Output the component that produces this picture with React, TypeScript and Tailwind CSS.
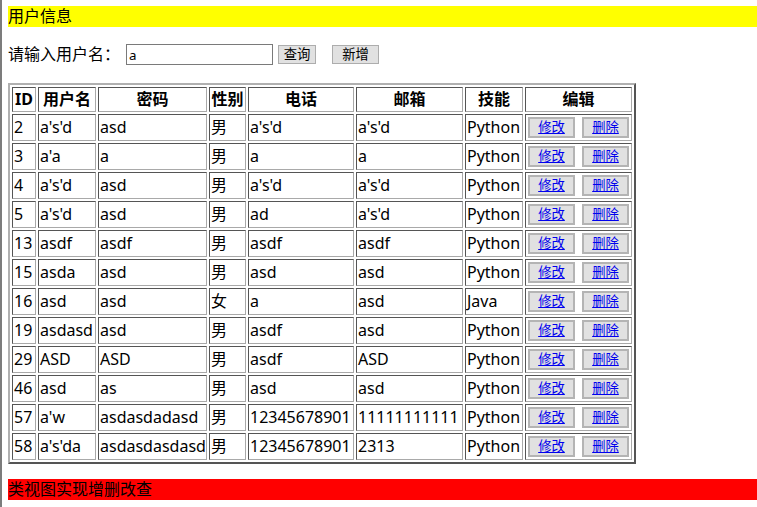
import React from "react";

type Row = [number, string, string, string, string, string, string];

const rows: Row[] = [
  [2, "a's'd", "asd", "男", "a's'd", "a's'd", "Python"],
  [3, "a'a", "a", "男", "a", "a", "Python"],
  [4, "a's'd", "asd", "男", "a's'd", "a's'd", "Python"],
  [5, "a's'd", "asd", "男", "ad", "a's'd", "Python"],
  [13, "asdf", "asdf", "男", "asdf", "asdf", "Python"],
  [15, "asda", "asd", "男", "asd", "asd", "Python"],
  [16, "asd", "asd", "女", "a", "asd", "Java"],
  [19, "asdasd", "asd", "男", "asdf", "asd", "Python"],
  [29, "ASD", "ASD", "男", "asdf", "ASD", "Python"],
  [46, "asd", "as", "男", "asd", "asd", "Python"],
  [57, "a'w", "asdasdadasd", "男", "12345678901", "11111111111", "Python"],
  [58, "a's'da", "asdasdasdasd", "男", "12345678901", "2313", "Python"],
];

const headers = [
  { label: "ID", w: "w-[24px]" },
  { label: "用户名", w: "w-[58px]" },
  { label: "密码", w: "w-[109px]" },
  { label: "性别", w: "w-[37px]" },
  { label: "电话", w: "w-[106px]" },
  { label: "邮箱", w: "w-[107px]" },
  { label: "技能", w: "w-[58px]" },
  { label: "编辑", w: "w-[107px]" },
];

const cell =
  "border border-t-[#555555] border-l-[#555555] border-r-[#a9a9a9] border-b-[#a9a9a9] p-[1px] whitespace-nowrap overflow-hidden";

function ActionButton({ label }: { label: string }) {
  return (
    <button className="w-[47px] h-[21px] border-2 border-[#b4b4b4] bg-[#e1e1e1] text-[13.33px] leading-[17px] flex items-center justify-center">
      <a href="#" className="text-[#0000ee] underline">
        {label}
      </a>
    </button>
  );
}

export default function App() {
  return (
    <div
      className="min-h-screen bg-white border-l-2 border-[#7c7c7c] pl-[6px] pt-[6px] text-black text-[16px]"
      style={{ fontFamily: '"Noto Sans", "Noto Sans CJK SC", sans-serif' }}
    >
      <div className="bg-[#ffff00] h-[21px] leading-[21px]">用户信息</div>

      <div className="mt-[17px] flex items-center h-[21px]">
        <span className="leading-[21px]">请输入用户名：</span>
        <input
          defaultValue="a"
          className="ml-[6px] w-[147px] h-[21px] border border-[#7a7a7a] px-[2px] text-[13.33px] outline-none"
        />
        <button className="ml-[5px] w-[38px] h-[19px] border border-[#adadad] bg-[#e1e1e1] text-[13.33px] leading-[17px]">
          查询
        </button>
        <button className="ml-[16px] w-[47px] h-[19px] border border-[#adadad] bg-[#e1e1e1] text-[13.33px] leading-[17px]">
          新增
        </button>
      </div>

      <table className="mt-[18px] w-[627px] table-fixed border-separate border-spacing-[2px] border-2 border-t-[#b0b0b0] border-l-[#b0b0b0] border-r-[#555555] border-b-[#555555]">
        <thead>
          <tr>
            {headers.map((h) => (
              <th
                key={h.label}
                className={`${cell} ${h.w} h-[24px] font-bold text-center leading-[21px]`}
              >
                {h.label}
              </th>
            ))}
          </tr>
        </thead>
        <tbody>
          {rows.map((r) => (
            <tr key={r[0]}>
              {r.map((v, i) => (
                <td key={i} className={`${cell} h-[27px] text-left leading-[23px]`}>
                  {v}
                </td>
              ))}
              <td className={`${cell} h-[27px]`}>
                <div className="flex items-center justify-center gap-[7px]">
                  <ActionButton label="修改" />
                  <ActionButton label="删除" />
                </div>
              </td>
            </tr>
          ))}
        </tbody>
      </table>

      <div className="mt-[15px] bg-[#ff0000] h-[21px] leading-[21px]">类视图实现增删改查</div>
    </div>
  );
}
